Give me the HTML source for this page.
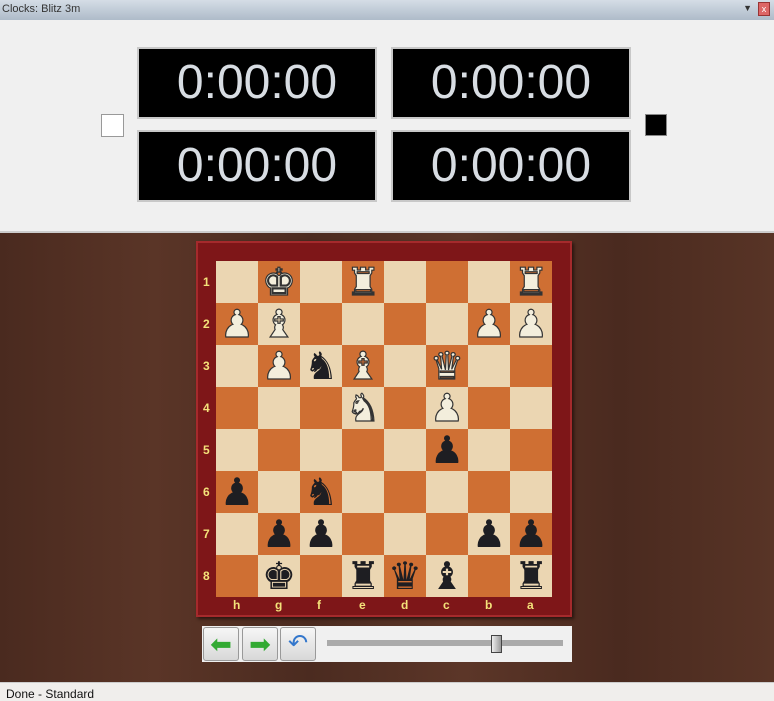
<!DOCTYPE html>
<html><head><style>
*{margin:0;padding:0;box-sizing:border-box}
body{width:774px;height:701px;overflow:hidden;background:#f0f0f0;font-family:"Liberation Sans",sans-serif;position:relative}
.title{position:absolute;left:0;top:0;width:774px;height:20px;background:linear-gradient(#d5dde6,#aebbc9);font-size:11px;color:#333;padding:3px 0 0 2px}
.clock{position:absolute;width:240px;height:72px;background:#000;border:2px solid #c8c8c8;color:#d8dde3;font-size:48px;text-align:center;line-height:68px;font-family:"Liberation Sans",sans-serif}
.wood{position:absolute;left:0;top:233px;width:774px;height:449px;background:linear-gradient(90deg,#4a2a1f,#5a3527 20%,#4b2b20 40%,#5c3628 60%,#4a2a1f 80%,#583426)}
.frame{position:absolute;left:196px;top:241px;width:376px;height:376px;background:#7e1618;border:2px solid #a52a2c;box-shadow:2px 2px 3px #2a150f}
.sq{position:absolute;width:42px;height:42px;text-align:center;line-height:42px;font-family:"DejaVu Sans",sans-serif;font-size:38px}
.l{background:#ebd6b2}.d{background:#cf6f33}
.w{color:#f3eedc;-webkit-text-stroke:1.2px #333}
.b{color:#1e1e22}
.lbl{position:absolute;color:#f4e27a;font-weight:bold;font-size:12px}
</style></head><body>
<div class="title">Clocks: Blitz 3m<span style="position:absolute;right:22px;top:3px;font-size:9px">▼</span><span style="position:absolute;right:4px;top:2px;width:12px;height:14px;background:#d66;border:1px solid #933;color:#fff;font-size:9px;text-align:center;line-height:12px">x</span></div>
<div class="clock" style="left:137px;top:47px">0:00:00</div>
<div class="clock" style="left:391px;top:47px">0:00:00</div>
<div class="clock" style="left:137px;top:130px">0:00:00</div>
<div class="clock" style="left:391px;top:130px">0:00:00</div>
<div style="position:absolute;left:101px;top:114px;width:23px;height:23px;background:#fff;border:1px solid #999"></div>
<div style="position:absolute;left:645px;top:114px;width:22px;height:22px;background:#000;border:1px solid #888"></div>
<div style="position:absolute;left:0;top:231px;width:774px;height:2px;background:#ccc"></div>
<div class="wood"></div>
<div class="frame"></div>
<div id="board"></div>
<div style="position:absolute;left:202px;top:626px;width:370px;height:36px;background:#f0f0f0"></div>
<div style="position:absolute;left:203px;top:627px;width:36px;height:34px;border:1px solid #999;border-radius:3px;background:linear-gradient(#f6f6f6,#d8d8d8);color:#3a3;font-size:26px;text-align:center;line-height:32px">⬅</div>
<div style="position:absolute;left:242px;top:627px;width:36px;height:34px;border:1px solid #999;border-radius:3px;background:linear-gradient(#f6f6f6,#d8d8d8);color:#3a3;font-size:26px;text-align:center;line-height:32px">➡</div>
<div style="position:absolute;left:280px;top:627px;width:36px;height:34px;border:1px solid #999;border-radius:3px;background:linear-gradient(#f6f6f6,#d8d8d8);color:#37c;font-size:24px;text-align:center;line-height:32px">↶</div>
<div style="position:absolute;left:327px;top:640px;width:236px;height:6px;background:#aaa"></div>
<div style="position:absolute;left:491px;top:635px;width:11px;height:18px;background:linear-gradient(90deg,#eee,#999);border:1px solid #444"></div>
<div style="position:absolute;left:0;top:682px;width:774px;height:19px;background:#f0eeec;border-top:1px solid #ccc;font-size:12px;padding:4px 0 0 6px;color:#111">Done - Standard</div>
<script>
var P={"0,1":"w♚","0,3":"w♜","0,7":"w♜","1,0":"w♟","1,1":"w♝","1,6":"w♟","1,7":"w♟","2,1":"w♟","2,2":"b♞","2,3":"w♝","2,5":"w♛","3,3":"w♞","3,5":"w♟","4,5":"b♟","5,0":"b♟","5,2":"b♞","6,1":"b♟","6,2":"b♟","6,6":"b♟","6,7":"b♟","7,1":"b♚","7,3":"b♜","7,4":"b♛","7,5":"b♝","7,7":"b♜"};
var h="";for(var r=0;r<8;r++){for(var c=0;c<8;c++){var k=P[r+","+c];h+='<div class="sq '+((r+c)%2?"d":"l")+'" style="left:'+(216+c*42)+'px;top:'+(261+r*42)+'px">'+(k?'<span class="'+k[0]+'">'+k.slice(1)+'</span>':'')+'</div>';}
h+='<div class="lbl" style="left:203px;top:'+(275+r*42)+'px">'+(r+1)+'</div>';}
var f="hgfedcba";for(var c=0;c<8;c++)h+='<div class="lbl" style="left:'+(233+c*42)+'px;top:598px">'+f[c]+'</div>';
document.getElementById("board").innerHTML=h;
</script>
</body></html>
